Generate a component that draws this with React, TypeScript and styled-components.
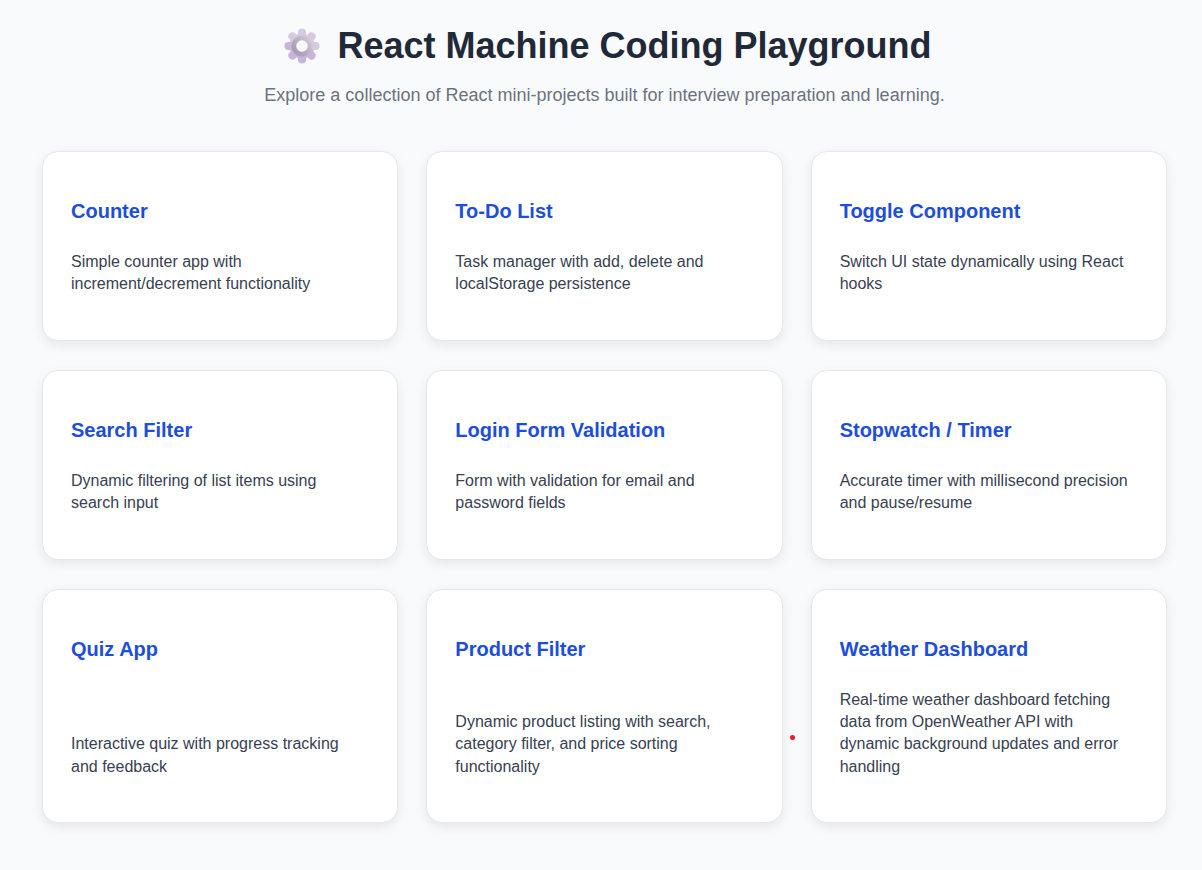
import React from "react";
import styled, { createGlobalStyle } from "styled-components";

const GlobalStyle = createGlobalStyle`
  *, *::before, *::after { box-sizing: border-box; }
  body {
    margin: 0;
    background: #f9fafc;
    font-family: "Liberation Sans", Arial, sans-serif;
  }
`;

const Page = styled.main`
  min-height: 100vh;
  padding: 25px 35px 47px 42px;
`;

const Header = styled.header`
  display: flex;
  flex-direction: column;
  align-items: center;
  gap: 18px;
  margin-bottom: 45px;
  text-align: center;
`;

const Title = styled.h1`
  display: flex;
  align-items: center;
  gap: 16px;
  margin: 0;
  padding-left: 6px;
  color: #1f2937;
  font-size: 36px;
  line-height: 42px;
`;

const Gear = styled.svg`
  width: 38px;
  height: 38px;
  flex: none;
`;

const Subtitle = styled.p`
  margin: 0;
  color: #6b7280;
  font-size: 18px;
  line-height: 21px;
`;

const Grid = styled.div`
  display: grid;
  grid-template-columns: repeat(auto-fit, minmax(280px, 1fr));
  gap: 29px 28px;
`;

const Card = styled.a`
  position: relative;
  display: flex;
  flex-direction: column;
  justify-content: space-between;
  padding: 28px;
  border: 1px solid #e5e7eb;
  border-radius: 16px;
  background: #ffffff;
  box-shadow: 0 4px 12px rgba(0, 0, 0, 0.08);
  color: #374151;
  text-decoration: none;
`;

const CardTitle = styled.h3`
  margin: 20px 0 12px;
  color: #1d4ed8;
  font-size: 20px;
  line-height: 23px;
`;

const CardText = styled.p`
  margin: 16px 0;
  padding-right: 4px;
  font-size: 16px;
  line-height: 1.4;
`;

const Marker = styled.span`
  position: absolute;
  top: 145px;
  left: -22px;
  width: 5px;
  height: 5px;
  border-radius: 50%;
  background: #ed1c24;
`;

interface Project {
  title: string;
  path: string;
  text: string;
  marked?: boolean;
}

const projects: Project[] = [
  { title: "Counter", path: "counter", text: "Simple counter app with increment/decrement functionality" },
  { title: "To-Do List", path: "todo", text: "Task manager with add, delete and localStorage persistence" },
  { title: "Toggle Component", path: "toggle", text: "Switch UI state dynamically using React hooks" },
  { title: "Search Filter", path: "search", text: "Dynamic filtering of list items using search input" },
  { title: "Login Form Validation", path: "login", text: "Form with validation for email and password fields" },
  { title: "Stopwatch / Timer", path: "stopwatch", text: "Accurate timer with millisecond precision and pause/resume" },
  { title: "Quiz App", path: "quiz", text: "Interactive quiz with progress tracking and feedback" },
  { title: "Product Filter", path: "products", text: "Dynamic product listing with search, category filter, and price sorting functionality" },
  {
    title: "Weather Dashboard",
    path: "weather",
    text: "Real-time weather dashboard fetching data from OpenWeather API with dynamic background updates and error handling",
    marked: true,
  },
];

const teeth = [0, 45, 90, 135, 180, 225, 270, 315];

function GearIcon() {
  return (
    <Gear viewBox="0 0 38 38" aria-hidden="true">
      <defs>
        <linearGradient id="gear-body" gradientUnits="userSpaceOnUse" x1="30" y1="4" x2="8" y2="34">
          <stop offset="0" stopColor="#dcd3e6" />
          <stop offset="1" stopColor="#c3b0d8" />
        </linearGradient>
        <linearGradient id="gear-ring" gradientUnits="userSpaceOnUse" x1="27" y1="11" x2="10" y2="25">
          <stop offset="0" stopColor="#d3cad9" />
          <stop offset="0.6" stopColor="#b5aabd" />
          <stop offset="1" stopColor="#a597b2" />
        </linearGradient>
      </defs>
      <circle cx="19" cy="19" r="12.6" fill="url(#gear-body)" />
      {teeth.map((angle) => (
        <path
          key={angle}
          transform={`rotate(${angle} 19 19)`}
          d="M14 10 Q15.4 8 15 5.4 C14.8 2.8 16.6 1.4 19 1.4 C21.4 1.4 23.2 2.8 23 5.4 Q22.6 8 24 10 Z"
          fill={angle > 90 && angle < 315 ? "#c7b6da" : "#d6cae3"}
        />
      ))}
      <circle cx="19" cy="19" r="8" fill="none" stroke="url(#gear-ring)" strokeWidth="5" />
      <circle cx="19" cy="19" r="5.7" fill="#f9fafc" />
    </Gear>
  );
}

export default function App() {
  return (
    <>
      <GlobalStyle />
      <Page>
        <Header>
          <Title>
            <GearIcon />
            <span>React Machine Coding Playground</span>
          </Title>
          <Subtitle>Explore a collection of React mini-projects built for interview preparation and learning.</Subtitle>
        </Header>
        <Grid>
          {projects.map((project) => (
            <Card key={project.path} href={`#/${project.path}`}>
              <CardTitle>{project.title}</CardTitle>
              <CardText>{project.text}</CardText>
              {project.marked && <Marker />}
            </Card>
          ))}
        </Grid>
      </Page>
    </>
  );
}
